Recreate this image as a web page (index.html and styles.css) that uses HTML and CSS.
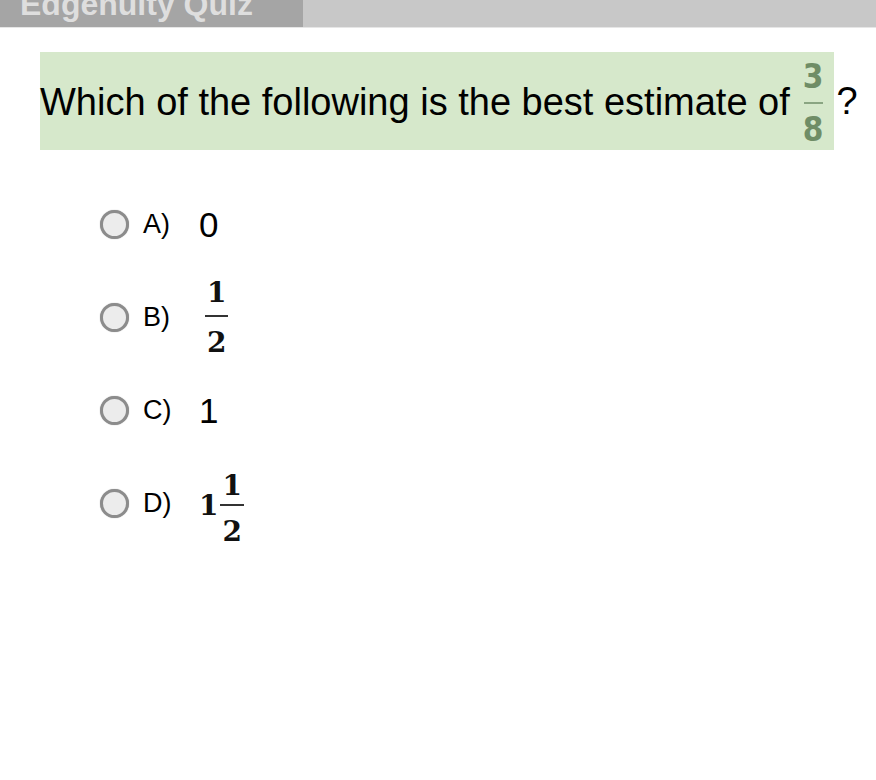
FILE: index.html
```html
<!DOCTYPE html>
<html lang="en">
  <head>
    <meta charset="UTF-8" />
    <meta name="viewport" content="width=device-width, initial-scale=1.0" />
    <title>Edgenuity Quiz</title>
    <link rel="stylesheet" href="styles.css">
  </head>
  <body>
    <div class="topbar">
      <div class="brand"><span class="brand-text">Edgenuity Quiz</span></div>
    </div>

    <div class="question">
      <span class="prompt">Which of the following is the best estimate of</span>
      <span class="frac frac-q">
        <span class="num">3</span>
        <span class="den">8</span>
      </span>
      <span class="mark">?</span>
    </div>

    <div class="choices">
      <label class="choice">
        <span class="radio"></span>
        <span class="letter">A)</span>
        <span class="value">0</span>
      </label>
      <label class="choice">
        <span class="radio"></span>
        <span class="letter">B)</span>
        <span class="frac frac-a">
          <span class="num">1</span>
          <span class="den">2</span>
        </span>
      </label>
      <label class="choice">
        <span class="radio"></span>
        <span class="letter">C)</span>
        <span class="value">1</span>
      </label>
      <label class="choice">
        <span class="radio"></span>
        <span class="letter">D)</span>
        <span class="mixed">
          <span class="whole">1</span>
          <span class="frac frac-a">
            <span class="num">1</span>
            <span class="den">2</span>
          </span>
        </span>
      </label>
    </div>
  </body>
</html>
```

FILE: styles.css
```css
body {
  margin: 0;
  font-family: "Liberation Sans", Arial, sans-serif;
  background: #ffffff;
  color: #000000;
}
.topbar {
  height: 27px;
  background: #c8c8c8;
  border-bottom: 1px solid #e6e6e6;
}
.brand {
  width: 283px;
  height: 27px;
  padding-left: 20px;
  background: #a5a5a5;
  overflow: hidden;
}
.brand-text {
  display: block;
  margin-top: -12px;
  color: #dedede;
  font-weight: bold;
  font-size: 32px;
  line-height: 32px;
  white-space: nowrap;
}
.question {
  width: 794px;
  height: 98px;
  margin: 24px 0 0 40px;
  background: #d6e8cb;
  display: flex;
  align-items: center;
  white-space: nowrap;
  font-size: 38px;
}
.prompt {
  margin-top: 2px;
}
.frac {
  display: inline-flex;
  flex-direction: column;
  align-items: center;
  font-family: "DejaVu Serif", "Liberation Serif", serif;
  font-weight: bold;
}
.frac-q {
  margin: 4px 0 0 13px;
  color: #6f8d66;
  font-family: "DejaVu Sans Condensed", "DejaVu Sans", sans-serif;
  font-size: 33px;
  line-height: 36px;
}
.frac-q .num::after {
  content: "";
  display: block;
  height: 2px;
  margin: 7px 1px 8px;
  background: #8aa582;
}
.mark {
  margin-left: 13px;
}
.choices {
  margin: 28px 0 0 100px;
}
.choice {
  display: flex;
  align-items: center;
  height: 93px;
}
.radio {
  width: 23px;
  height: 23px;
  border: 3px solid #8c8c8c;
  border-radius: 50%;
  background: #ececec;
  box-shadow: 0 0 1px #9a9a9a;
}
.letter {
  width: 56px;
  margin-left: 14px;
  font-size: 27px;
}
.value {
  font-size: 35px;
}
.frac-a {
  font-size: 28px;
  line-height: 26px;
  color: #111111;
}
.frac-a .num {
  padding: 0 2px 9px;
  border-bottom: 2px solid #333333;
  margin-bottom: 13px;
}
.choice > .frac-a {
  margin-left: 6px;
}
.mixed {
  display: flex;
  align-items: center;
  font-family: "DejaVu Serif", "Liberation Serif", serif;
  font-weight: bold;
  font-size: 28px;
  color: #111111;
}
.mixed .frac-a {
  margin-top: 10px;
}
.mixed .frac-a .num {
  padding-bottom: 5px;
}
.whole {
  margin: 4px 2px 0 0;
}
```
